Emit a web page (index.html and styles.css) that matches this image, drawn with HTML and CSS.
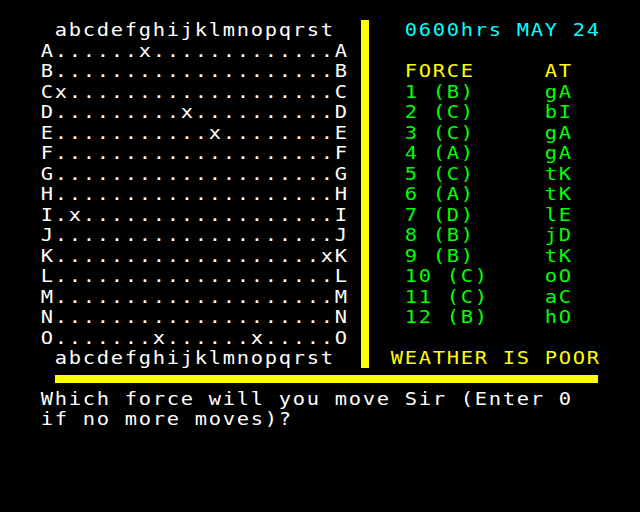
FILE: index.html
```html
<!DOCTYPE html>
<html>
<head>
<meta charset="utf-8">
<link rel="stylesheet" href="styles.css">
</head>
<body>
<div class="screen">
  <div class="board">
    <div class="line"> abcdefghijklmnopqrst</div>
    <div class="line">A......x.............A</div>
    <div class="line">B....................B</div>
    <div class="line">Cx...................C</div>
    <div class="line">D.........x..........D</div>
    <div class="line">E...........x........E</div>
    <div class="line">F....................F</div>
    <div class="line">G....................G</div>
    <div class="line">H....................H</div>
    <div class="line">I.x..................I</div>
    <div class="line">J....................J</div>
    <div class="line">K...................xK</div>
    <div class="line">L....................L</div>
    <div class="line">M....................M</div>
    <div class="line">N....................N</div>
    <div class="line">O.......x......x.....O</div>
    <div class="line"> abcdefghijklmnopqrst</div>
  </div>
  <div class="divider"></div>
  <div class="panel">
    <div class="line cyan">  0600hrs MAY 24</div>
    <div class="line"></div>
    <div class="line yellow">  FORCE     AT</div>
    <div class="line green">  1 (B)     gA</div>
    <div class="line green">  2 (C)     bI</div>
    <div class="line green">  3 (C)     gA</div>
    <div class="line green">  4 (A)     gA</div>
    <div class="line green">  5 (C)     tK</div>
    <div class="line green">  6 (A)     tK</div>
    <div class="line green">  7 (D)     lE</div>
    <div class="line green">  8 (B)     jD</div>
    <div class="line green">  9 (B)     tK</div>
    <div class="line green">  10 (C)    oO</div>
    <div class="line green">  11 (C)    aC</div>
    <div class="line green">  12 (B)    hO</div>
    <div class="line"></div>
    <div class="line yellow"> WEATHER IS POOR</div>
  </div>
  <div class="rule"></div>
  <div class="prompt">
    <div class="line">Which force will you move Sir (Enter 0</div>
    <div class="line">if no more moves)?</div>
  </div>
</div>
</body>
</html>
```
FILE: styles.css
```css
html, body {
  margin: 0;
  padding: 0;
  background: #000;
}

.screen {
  display: grid;
  grid-template-columns: 322px 14px 224px;
  grid-template-rows: repeat(25, 20.48px);
  width: 560px;
  height: 512px;
  padding-left: 40px;
  font-family: "DejaVu Sans Mono", monospace;
  font-size: 17px;
  letter-spacing: 1.433px;
  line-height: 20.48px;
  color: #fff;
}

.board {
  grid-column: 1;
  grid-row: 2 / 19;
}

.panel {
  grid-column: 3;
  grid-row: 2 / 19;
}

.line {
  width: max-content;
  height: 20.48px;
  white-space: pre;
  padding-left: 0.6px;
  transform: scaleX(1.2);
  transform-origin: 0 0;
}

.divider {
  grid-column: 2;
  grid-row: 2 / 19;
  width: 8px;
  margin-left: -1px;
  background: #ffff00;
}

.rule {
  grid-column: 1 / 4;
  grid-row: 19;
  height: 8px;
  margin-top: 6.5px;
  margin-left: 15px;
  margin-right: 2px;
  background: #ffff00;
}

.prompt {
  grid-column: 1 / 4;
  grid-row: 20 / 22;
}

.cyan { color: #00ffff; }
.yellow { color: #ffff00; }
.green { color: #00ff00; }
```
